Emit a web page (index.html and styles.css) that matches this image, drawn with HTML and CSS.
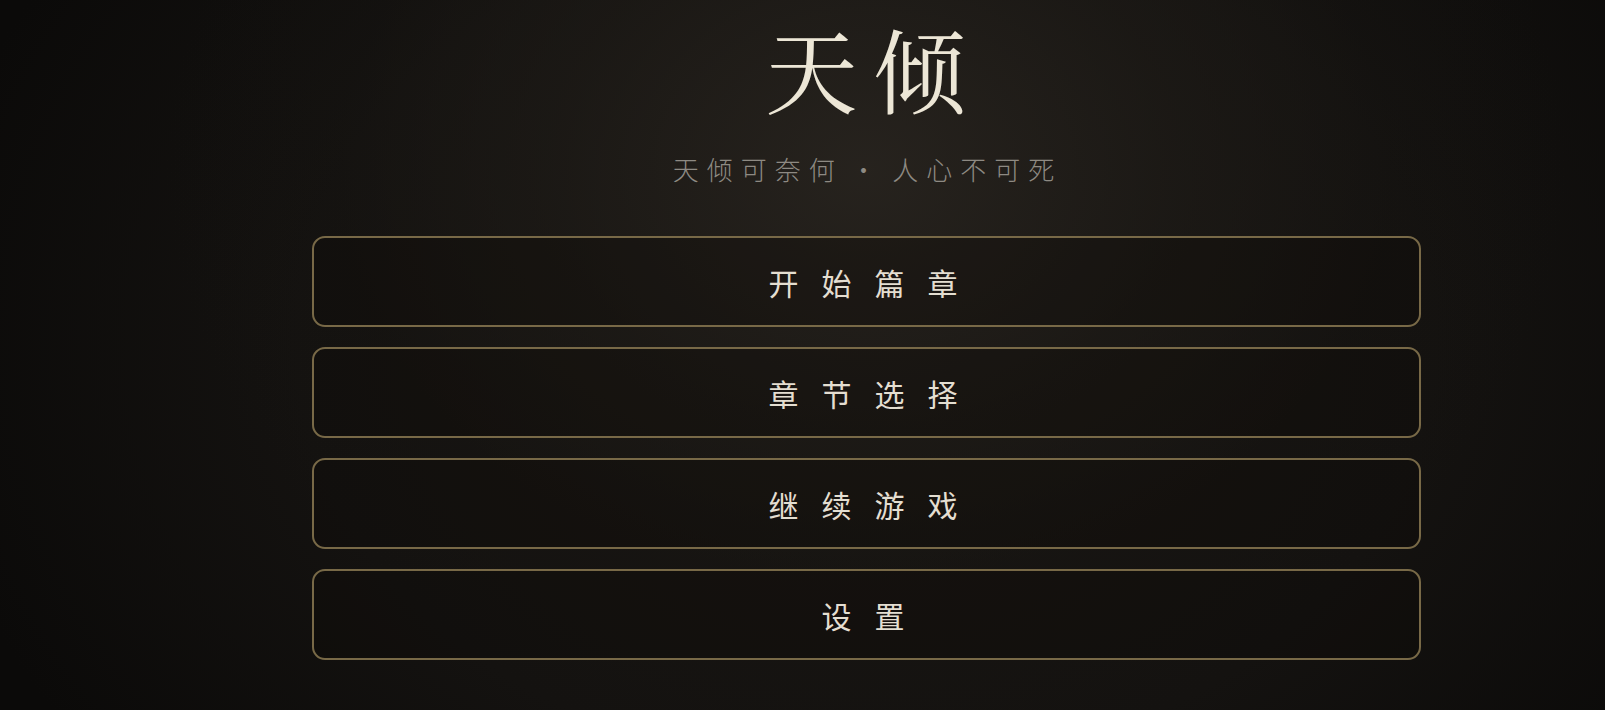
FILE: index.html
```html
<!DOCTYPE html>
<html lang="zh-CN">
<head>
<meta charset="utf-8">
<title>天倾</title>
<link rel="stylesheet" href="styles.css">
</head>
<body>
<main class="screen">
  <div class="menu">
    <h1 class="title">天倾</h1>
    <p class="subtitle">天倾可奈何 · 人心不可死</p>
    <nav class="buttons">
      <button class="btn">开始篇章</button>
      <button class="btn">章节选择</button>
      <button class="btn">继续游戏</button>
      <button class="btn">设置</button>
    </nav>
  </div>
</main>
</body>
</html>
```

FILE: styles.css
```css
html, body {
  margin: 0;
  padding: 0;
  width: 100%;
  height: 100%;
  overflow: hidden;
}

body {
  background: #0b0a09;
  font-family: "Noto Sans CJK SC", "Noto Sans", sans-serif;
}

.screen {
  height: 710px;
  box-sizing: border-box;
  padding-left: 312px;
  background:
    radial-gradient(ellipse 700px 560px at 866px 170px, rgba(40, 36, 31, 0.9) 0%, rgba(30, 27, 23, 0.65) 45%, rgba(22, 20, 17, 0.3) 75%, rgba(11, 10, 9, 0) 100%),
    radial-gradient(ellipse 950px 720px at 866px 340px, #1a1714 0%, #141210 60%, #0b0a09 100%);
}

.menu {
  width: 1109px;
  display: flex;
  flex-direction: column;
  align-items: center;
}

.title {
  margin: 15px 0 0 0;
  font-family: "Noto Serif CJK SC", "Source Han Serif SC", "Noto Sans CJK SC", serif;
  font-weight: 400;
  font-size: 92px;
  line-height: 104px;
  letter-spacing: 16px;
  padding-left: 14px;
  color: #ece6d6;
}

.subtitle {
  margin: 32px 0 0 0;
  font-size: 26px;
  line-height: 36px;
  font-weight: 300;
  letter-spacing: 8px;
  word-spacing: -6px;
  padding-left: 2px;
  color: #8e8a83;
}

.buttons {
  margin-top: 49px;
  width: 100%;
  display: flex;
  flex-direction: column;
  gap: 20px;
}

.btn {
  height: 91px;
  width: 100%;
  box-sizing: border-box;
  border: 2px solid #786947;
  border-radius: 13px;
  background: rgba(12, 10, 8, 0.3);
  color: #e4ded1;
  font-family: "Noto Sans CJK SC", "Noto Sans", sans-serif;
  font-size: 30px;
  font-weight: 400;
  letter-spacing: 23px;
  padding: 0 0 0 16px;
  cursor: pointer;
}
```
